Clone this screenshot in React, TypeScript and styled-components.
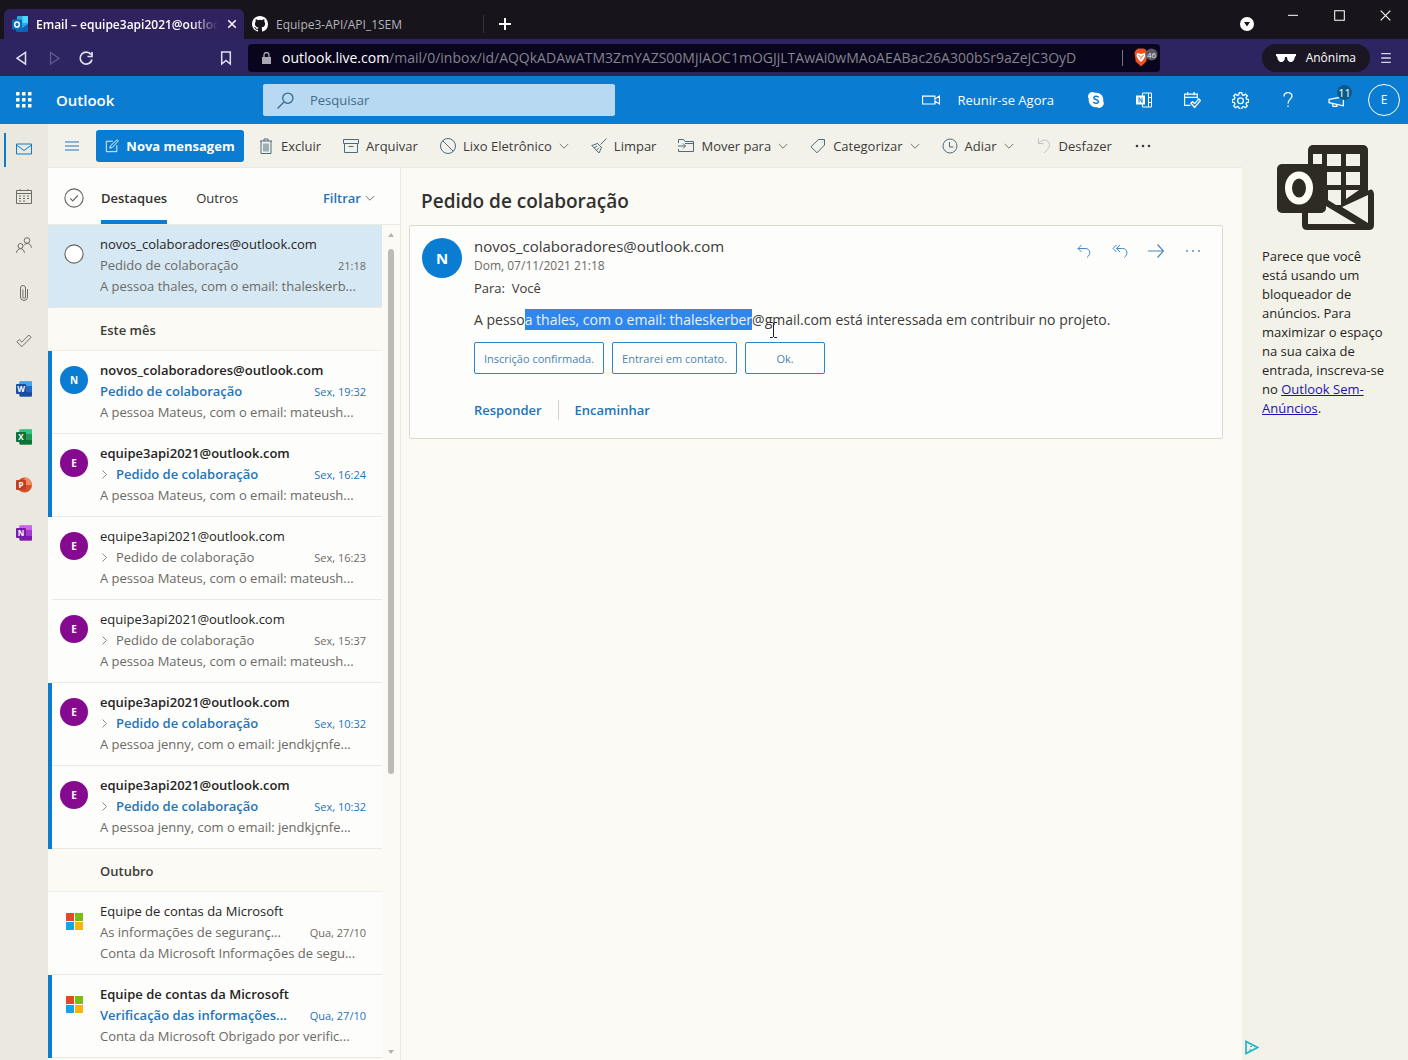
import React from "react";
import styled, { createGlobalStyle, css } from "styled-components";

const blue = "#0a7cd2";
const link = "#1f74b8";

const Global = createGlobalStyle`
  * { box-sizing: border-box; }
  html, body { margin: 0; height: 100%; }
  #root { height: 100vh; }
  body, button, input { font-family: "Open Sans", "Noto Sans", sans-serif; font-size: 13px; color: #3b3a39; }
  button { background: none; border: 0; padding: 0; margin: 0; }
  svg { display: block; flex: none; }
`;

const Shell = styled.div`
  height: 100vh;
  min-height: 600px;
  display: flex;
  flex-direction: column;
  overflow: hidden;
  background: #fbfaf4;
`;

/* ---------- browser chrome ---------- */
const TabStrip = styled.div`
  height: 39px;
  flex: none;
  display: flex;
  padding-left: 4px;
  background: #17141c;
  color: #c9c7d0;
`;
const Tab = styled.div<{ $active?: boolean }>`
  display: flex;
  align-items: center;
  gap: 8px;
  width: 240px;
  height: 30px;
  margin-top: 9px;
  padding: 0 6px 0 8px;
  font-size: 12px;
  white-space: nowrap;
  border-radius: 6px 6px 0 0;
  ${(p) =>
    p.$active
      ? css`background: #30225f; color: #fff; font-weight: 600;`
      : css`color: #b5b3ba; padding-right: 0; &::after { content: ""; margin-left: auto; width: 1px; height: 18px; background: #34313a; }`}
`;
const TabTitle = styled.span<{ $fade?: boolean }>`
  min-width: 0;
  overflow: hidden;
  ${(p) => p.$fade && css`flex: 1; mask-image: linear-gradient(90deg, #000 85%, transparent);`}
`;
const NewTab = styled.button`
  width: 42px;
  margin-top: 9px;
  display: grid;
  place-items: center;
`;
const WindowControls = styled.div`
  margin-left: auto;
  display: flex;
  height: 30px;
`;
const WindowButton = styled.button<{ $low?: boolean }>`
  width: 46px;
  display: grid;
  place-items: center;
  ${(p) => p.$low && css`height: 48px;`}
`;
const NavBar = styled.div`
  height: 37px;
  flex: none;
  display: flex;
  align-items: center;
  background: #2d2462;
  padding: 0 6px 0 6px;
`;
const NavButton = styled.button`
  width: 32px;
  height: 32px;
  display: grid;
  place-items: center;
`;
const NavLeft = styled.div`
  width: 242px;
  display: flex;
  padding-right: 6px;
  button:last-child { margin-left: auto; }
`;
const Address = styled.div`
  flex: 1;
  height: 28px;
  display: flex;
  align-items: center;
  gap: 11px;
  padding: 0 1px 0 14px;
  background: #08051c;
  border-radius: 4px;
  font-size: 14px;
  color: #85838c;
  white-space: nowrap;
  overflow: hidden;
  b { color: #fff; font-weight: 400; }
`;
const UrlText = styled.span`
  flex: 1;
  min-width: 0;
  overflow: hidden;
`;
const Shield = styled.div`
  display: flex;
  align-items: center;
  gap: 10px;
  &::before { content: ""; width: 1px; height: 16px; background: #77747f; }
`;
const NavRight = styled.div`
  width: 242px;
  display: flex;
  align-items: center;
  justify-content: flex-end;
`;
const Private = styled.div`
  height: 28px;
  display: flex;
  align-items: center;
  gap: 10px;
  padding: 0 14px;
  border-radius: 14px;
  background: #1b1623;
  color: #fff;
  font-size: 12px;
`;

/* ---------- outlook header ---------- */
const Header = styled.header`
  height: 48px;
  flex: none;
  display: flex;
  align-items: center;
  background: ${blue};
  color: #fff;
`;
const HeaderButton = styled.button`
  position: relative;
  width: 48px;
  height: 48px;
  display: grid;
  place-items: center;
  color: #fff;
`;
const Brand = styled.div`
  width: 207px;
  padding-left: 8px;
  font-size: 15px;
  font-weight: 600;
`;
const Search = styled.label`
  width: 25%;
  height: 32px;
  margin: 0 auto 0 8px;
  display: flex;
  align-items: center;
  gap: 14px;
  padding: 0 14px;
  border-radius: 2px;
  background: #b7daf2;
  input { flex: 1; min-width: 0; border: 0; background: none; outline: 0; }
  input::placeholder { color: #426a88; opacity: 1; }
`;
const Meet = styled.button`
  display: flex;
  align-items: center;
  gap: 17px;
  margin-right: 18px;
  color: #fff;
`;
const Count = styled.span`
  position: absolute;
  top: 9px;
  right: 8px;
  width: 15px;
  height: 15px;
  border-radius: 8px;
  background: #0b5a8c;
  font-size: 11px;
  line-height: 15px;
  text-align: center;
`;
const Me = styled.span`
  width: 32px;
  height: 32px;
  border: 1px solid #fff;
  border-radius: 50%;
  font-size: 12px;
  line-height: 30px;
`;

/* ---------- body ---------- */
const Body = styled.div`
  flex: 1;
  min-height: 0;
  display: flex;
`;
const Rail = styled.nav`
  width: 48px;
  flex: none;
  display: flex;
  flex-direction: column;
  padding-top: 1px;
  background: #ebe8df;
`;
const RailButton = styled.button<{ $active?: boolean }>`
  height: 48px;
  display: grid;
  place-items: center;
  position: relative;
  ${(p) =>
    p.$active &&
    css`&::before { content: ""; position: absolute; left: 4px; top: 8px; bottom: 6px; width: 2px; background: ${blue}; }`}
`;
const Center = styled.div`
  flex: 1;
  min-width: 0;
  display: flex;
  flex-direction: column;
`;
const Toolbar = styled.div`
  height: 44px;
  flex: none;
  display: flex;
  align-items: center;
  gap: 22px;
  padding: 1px 0 0 16px;
  background: #f3f2ea;
  border-bottom: 1px solid #eceae2;
`;
const Tool = styled.button`
  display: flex;
  align-items: center;
  gap: 7px;
  white-space: nowrap;
  line-height: 20px;
`;
const NewMessage = styled(Tool)`
  width: 148px;
  height: 32px;
  justify-content: center;
  margin: 0 -8px 0 -6px;
  border-radius: 3px;
  background: ${blue};
  color: #fff;
  font-weight: 700;
`;
const Panes = styled.div`
  flex: 1;
  min-height: 0;
  display: flex;
`;
const ListPane = styled.section`
  width: 353px;
  flex: none;
  display: flex;
  flex-direction: column;
  border-right: 1px solid #ebe9df;
`;
const ListHeader = styled.div`
  height: 57px;
  flex: none;
  display: flex;
  align-items: center;
  padding: 4px 25px 0 16px;
  background: #fdfdfb;
  border-bottom: 1px solid #ecebe2;
`;
const Pivot = styled.button<{ $active?: boolean }>`
  height: 52px;
  margin-right: 29px;
  color: #323130;
  ${(p) => p.$active && css`margin-left: 17px; font-weight: 600; box-shadow: inset 0 -4px ${blue};`}
`;
const Filter = styled.button`
  display: flex;
  align-items: center;
  gap: 4px;
  margin-left: auto;
  color: ${link};
  font-weight: 600;
`;
const ListBody = styled.div`
  flex: 1;
  min-height: 0;
  display: flex;
`;
const Messages = styled.div`
  flex: 1;
  min-width: 0;
  overflow: hidden;
`;
const Group = styled.h2`
  height: 43px;
  margin: 0;
  padding: 2px 0 0 52px;
  font-size: 13px;
  font-weight: 600;
  line-height: 40px;
  border-bottom: 1px solid #f0efe6;
`;
const Row = styled.article<{ $unread?: boolean; $selected?: boolean }>`
  height: 83px;
  display: flex;
  gap: 12px;
  padding: 9px 16px 0 8px;
  border-left: 4px solid ${(p) => (p.$unread ? blue : p.$selected ? "#d6e8f4" : "#fdfdfb")};
  background: ${(p) => (p.$selected ? "#d6e8f4" : "#fdfdfb")};
  background-clip: padding-box;
  box-shadow: inset 0 -1px #eae9e2;
  line-height: 21px;
`;
const Avatar = styled.span<{ $color: string; $large?: boolean }>`
  flex: none;
  display: grid;
  place-items: center;
  width: ${(p) => (p.$large ? 40 : 28)}px;
  height: ${(p) => (p.$large ? 40 : 28)}px;
  margin-top: ${(p) => (p.$large ? 0 : 6)}px;
  border-radius: 50%;
  background: ${(p) => p.$color};
  color: #fff;
  font-size: ${(p) => (p.$large ? 15 : 10)}px;
  font-weight: 700;
`;
const IconSlot = styled.span`
  flex: none;
  display: grid;
  place-items: center;
  width: 28px;
  height: 28px;
  margin-top: 6px;
`;
const RowText = styled.div`
  flex: 1;
  min-width: 0;
`;
const Clip = styled.div`
  flex: 1;
  min-width: 0;
  overflow: hidden;
  white-space: nowrap;
  text-overflow: ellipsis;
`;
const From = styled(Clip)<{ $unread?: boolean }>`
  color: #252423;
  font-weight: ${(p) => (p.$unread ? 600 : 400)};
`;
const SubjectLine = styled.div<{ $unread?: boolean }>`
  display: flex;
  align-items: center;
  color: ${(p) => (p.$unread ? link : "#6b6a65")};
  svg { margin: 0 9px 0 2px; }
  ${Clip} { font-weight: ${(p) => (p.$unread ? 600 : 400)}; }
`;
const When = styled.time`
  padding-left: 16px;
  font-size: 11px;
`;
const Preview = styled(Clip)`
  color: #6b6a65;
`;
const Scrollbar = styled.div`
  width: 18px;
  flex: none;
  display: flex;
  flex-direction: column;
  align-items: center;
  gap: 12px;
  padding: 8px 0 6px;
  svg:last-child { margin-top: auto; }
`;
const Thumb = styled.div`
  width: 6px;
  height: 64%;
  border-radius: 3px;
  background: #bdbcb2;
`;

const Reading = styled.main`
  flex: 1;
  min-width: 0;
  padding: 0 19px 0 8px;
`;
const Title = styled.h1`
  height: 57px;
  margin: 0;
  padding: 5px 12px 0;
  font-size: 19px;
  font-weight: 600;
  line-height: 56px;
  color: #323130;
`;
const Card = styled.article`
  display: flex;
  gap: 12px;
  padding: 12px 20px 18px 12px;
  border: 1px solid #dddbd0;
  border-radius: 2px;
  background: #fdfdfb;
`;
const CardBody = styled.div`
  flex: 1;
  min-width: 0;
`;
const CardTop = styled.div`
  display: flex;
  justify-content: space-between;
`;
const Sender = styled.div`
  font-size: 15px;
  line-height: 16px;
`;
const Sent = styled.div`
  color: #6b6a65;
  font-size: 12px;
  line-height: 24px;
`;
const To = styled.div`
  margin-bottom: 10px;
  line-height: 21px;
`;
const Actions = styled.div`
  display: flex;
  align-items: flex-start;
  gap: 20px;
  padding-top: 5px;
`;
const Text = styled.p`
  margin: 0 0 11px;
  font-size: 14px;
  line-height: 22px;
`;
const Mark = styled.mark`
  padding: 1px 0;
  background: #2f86ec;
  color: #eaf3ff;
`;
const CursorSpot = styled.span`
  position: relative;
  svg { position: absolute; left: 4px; top: 12px; }
`;
const Suggestions = styled.div`
  display: flex;
  gap: 8px;
`;
const Suggestion = styled.button`
  height: 32px;
  min-width: 80px;
  padding: 0 9px;
  border: 1px solid #2a86c6;
  border-radius: 2px;
  color: #4a83b4;
  font-size: 11px;
`;
const Replies = styled.div`
  display: flex;
  align-items: center;
  margin-top: 26px;
  button { color: ${link}; font-weight: 600; line-height: 20px; }
  button + button { margin-left: 16px; padding-left: 16px; border-left: 1px solid #d2d0ca; }
`;

const Ad = styled.aside`
  width: 166px;
  flex: none;
  display: flex;
  flex-direction: column;
  padding: 20px 20px 5px;
  background: #f3f2e9;
`;
const AdText = styled.p`
  margin: 17px 0 auto;
  line-height: 19px;
  color: #252423;
  a { color: #1b12b0; }
`;
const AdLogo = styled.svg`
  align-self: center;
`;
const AdMark = styled.svg`
  margin-left: -18px;
`;

/* ---------- icons ---------- */
type IconProps = { d: string; c?: string; s?: number; w?: number; fill?: string };
const Icon = ({ d, c = "currentColor", s = 16, w = 1, fill = "none" }: IconProps) => (
  <svg width={s} height={s} viewBox="0 0 16 16" fill={fill} stroke={c} strokeWidth={w} aria-hidden="true">
    <path d={d} />
  </svg>
);
const Chevron = ({ c = "#777670" }: { c?: string }) => (
  <svg width="10" height="10" viewBox="0 0 10 10" fill="none" stroke={c}><path d="M.8 3l4.2 4.2L9.2 3" /></svg>
);
const ChevronRight = () => (
  <svg width="5" height="9" viewBox="0 0 5 9" fill="none" stroke="#8b8a85"><path d="M.5.5l4 4-4 4" /></svg>
);

const OfficeIcon = ({ letter, dark, mid, light, round }: { letter: string; dark: string; mid: string; light: string; round?: boolean }) => (
  <svg width="16" height="16" viewBox="0 0 16 16" aria-hidden="true">
    {round ? (
      <>
        <circle cx="8.5" cy="8" r="7.5" fill={mid} />
        <path d="M8.5.5A7.500 7.500 0 0 1 16 8H8.500Z" fill={light} />
      </>
    ) : (
      <>
        <rect x="3.500" y=".5" width="12.500" height="15" rx="1" fill={mid} />
        <path d="M4 .5h11.500q.5 0 .5.5v4H3.500V1q0-.5.5-.5Z" fill={light} />
        <path d="M3.500 11H16v3.500q0 1-1 1H4.500q-1 0-1-1Z" fill={dark} />
      </>
    )}
    <rect x="0" y="3" width="10" height="10" rx="1" fill={dark} />
    <text x="5" y="11" fontSize="8" fontWeight="700" textAnchor="middle" fill="#fff">{letter}</text>
  </svg>
);

const MsLogo = () => (
  <svg width="17" height="17" viewBox="0 0 17 17" aria-hidden="true">
    <path fill="#e2482a" d="M0 0h8v8H0z" />
    <path fill="#7cbb10" d="M9 0h8v8H9z" />
    <path fill="#13a5e8" d="M0 9h8v8H0z" />
    <path fill="#f8b40c" d="M9 9h8v8H9z" />
  </svg>
);

const OutlookFavicon = () => (
  <svg width="16" height="16" viewBox="0 0 16 16" aria-hidden="true">
    <rect x="5" y="0" width="11" height="15" rx="1" fill="#28a8ea" />
    <path fill="#50d9ff" d="M10.500 0H15q1 0 1 1v6h-5.500z" />
    <path fill="#0f64b5" d="M4 8l6 4 6-4v7q0 1-1 1H5q-1 0-1-1z" />
    <rect y="3.500" width="10" height="10" rx="1" fill="#0a6ebd" />
    <ellipse cx="5" cy="8.500" rx="2.300" ry="2.600" fill="none" stroke="#fff" strokeWidth="1.500" />
  </svg>
);

const railIcons = [
  "M.5 3h15v10H.5zM.5 4L8 9.500 15.500 4",
  "M.5 1.500h15v13H.5zM.5 4.500h15M4 0v2M12 0v2M3 7h2M7 7h2M11 7h2M3 9.500h2M7 9.500h2M11 9.500h2M3 12h2M7 12h2",
  "M13.800 3.500a2.800 2.800 0 1 1-5.600 0 2.800 2.800 0 0 1 5.600 0ZM7 9a2.500 2.500 0 1 1-5 0 2.500 2.500 0 0 1 5 0ZM.6 15.800c.3-5.500 7.500-5.500 7.800 0M8 8.300c2.500-3.300 7-2 7.400 2.500",
  "M11.500 4v8a3.500 3.500 0 0 1-7 0V3a2.400 2.400 0 0 1 5 0v9a1.300 1.300 0 0 1-2.600 0V4.500",
  "M.9 8.800l2.300-2.300 2.600 2.600L12.800 2l2.300 2.300L5.800 13.700z",
];
const railNames = ["Email", "Calendário", "Pessoas", "Arquivos", "Tarefas"];

const tools: { label: string; d: string; menu?: boolean; c?: string }[] = [
  { label: "Excluir", d: "M2 3h12M6 3V1h4v2M3 3v12.500h10V3M6 5.500v8M8 5.500v8M10 5.500v8" },
  { label: "Arquivar", d: "M.5 1.500h15v4H.5zM1.500 5.500v9h13v-9M5.500 8.500h5" },
  { label: "Lixo Eletrônico", d: "M15.500 8A7.500 7.500 0 1 1 .5 8a7.500 7.500 0 0 1 15 0ZM2.700 2.700l10.600 10.600", menu: true },
  { label: "Limpar", d: "M15.500 .5L9.500 6.500M6 5l5 5M6.500 5.500L.8 7.500 8 15l2.500-5.500M3.200 9.800l3-1.800M5.500 12.200l2.500-2.500" },
  { label: "Mover para", d: "M.5 5V1.500h5l1.500 2h8.500v10h-15V11M0 8h7.500M5 5.500L7.500 8 5 10.500M7 5.500h8", menu: true },
  { label: "Categorizar", d: "M8.500 1.500h6v5.500L7 14.800.9 8.800zM12.300 4h.5", menu: true },
  { label: "Adiar", d: "M15 8A7 7 0 1 1 1 8a7 7 0 0 1 14 0ZM7.500 4v5h4", menu: true },
  { label: "Desfazer", d: "M2.500.5v5h5M2.500 5.500C6 .5 13 1 13.500 6.500c0 4-3 6-5.500 8.500", c: "#c4c3bd" },
];

type Mail = { from: string; subject: string; when: string; preview: string; unread?: boolean; thread?: boolean; kind: "N" | "E" | "MS" };
const eq = "equipe3api2021@outlook.com";
const ped = "Pedido de colaboração";
const mat = "A pessoa Mateus, com o email: mateush...";
const jen = "A pessoa jenny, com o email: jendkjçnfe...";
const thisMonth: Mail[] = [
  { from: "novos_colaboradores@outlook.com", subject: ped, when: "Sex, 19:32", preview: mat, unread: true, kind: "N" },
  { from: eq, subject: ped, when: "Sex, 16:24", preview: mat, unread: true, thread: true, kind: "E" },
  { from: eq, subject: ped, when: "Sex, 16:23", preview: mat, thread: true, kind: "E" },
  { from: eq, subject: ped, when: "Sex, 15:37", preview: mat, thread: true, kind: "E" },
  { from: eq, subject: ped, when: "Sex, 10:32", preview: jen, unread: true, thread: true, kind: "E" },
  { from: eq, subject: ped, when: "Sex, 10:32", preview: jen, unread: true, thread: true, kind: "E" },
];
const october: Mail[] = [
  { from: "Equipe de contas da Microsoft", subject: "As informações de seguranç...", when: "Qua, 27/10", preview: "Conta da Microsoft Informações de segu...", kind: "MS" },
  { from: "Equipe de contas da Microsoft", subject: "Verificação das informações...", when: "Qua, 27/10", preview: "Conta da Microsoft Obrigado por verific...", unread: true, kind: "MS" },
];

const MailRow = ({ m }: { m: Mail }) => (
  <Row $unread={m.unread}>
    {m.kind === "MS" ? (
      <IconSlot><MsLogo /></IconSlot>
    ) : (
      <Avatar $color={m.kind === "N" ? blue : "#850a90"}>{m.kind}</Avatar>
    )}
    <RowText>
      <From $unread={m.unread}>{m.from}</From>
      <SubjectLine $unread={m.unread}>
        {m.thread && <ChevronRight />}
        <Clip>{m.subject}</Clip>
        <When>{m.when}</When>
      </SubjectLine>
      <Preview>{m.preview}</Preview>
    </RowText>
  </Row>
);

export default function App() {
  return (
    <Shell>
      <Global />
      <TabStrip>
        <Tab $active>
          <OutlookFavicon />
          <TabTitle $fade>Email – equipe3api2021@outlook</TabTitle>
          <Icon d="M3 3l10 10M13 3L3 13" c="#fff" s={12} w={2} />
        </Tab>
        <Tab>
          <svg width="16" height="16" viewBox="0 0 16 16" fill="#fff" aria-hidden="true">
            <path d="M8 0C3.580 0 0 3.580 0 8c0 3.540 2.290 6.530 5.470 7.590.4.070.55-.17.55-.38 0-.19-.01-.82-.01-1.490-2.010.37-2.530-.49-2.690-.94-.09-.23-.48-.94-.82-1.130-.28-.15-.68-.52-.01-.53.63-.01 1.080.58 1.230.82.72 1.210 1.870.87 2.330.66.07-.52.28-.87.51-1.070-1.780-.2-3.640-.89-3.640-3.950 0-.87.31-1.590.82-2.150-.08-.2-.36-1.020.08-2.120 0 0 .67-.21 2.200.82a7.600 7.600 0 0 1 4 0c1.530-1.040 2.200-.82 2.200-.82.44 1.100.16 1.920.08 2.120.51.56.82 1.270.82 2.150 0 3.070-1.870 3.750-3.650 3.950.29.25.54.73.54 1.480 0 1.070-.01 1.930-.01 2.200 0 .21.15.46.55.38A8.010 8.010 0 0 0 16 8c0-4.420-3.580-8-8-8z" />
          </svg>
          <TabTitle>Equipe3-API/API_1SEM</TabTitle>
        </Tab>
        <NewTab aria-label="Nova guia"><Icon d="M8 2v12M2 8h12" c="#fff" w={2} /></NewTab>
        <WindowControls>
          <WindowButton $low aria-label="Guias">
            <svg width="14" height="14" viewBox="0 0 14 14"><circle cx="7" cy="7" r="7" fill="#fff" /><path d="M4 5h6L7 9.500z" fill="#17141c" /></svg>
          </WindowButton>
          <WindowButton aria-label="Minimizar"><Icon d="M0 8.500h16" c="#fff" s={10} w={1.600} /></WindowButton>
          <WindowButton aria-label="Maximizar"><Icon d="M1 1h14v14H1z" c="#fff" s={11} w={1.500} /></WindowButton>
          <WindowButton aria-label="Fechar"><Icon d="M1 1l14 14M15 1L1 15" c="#fff" s={11} w={1.600} /></WindowButton>
        </WindowControls>
      </TabStrip>
      <NavBar>
        <NavLeft>
          <NavButton aria-label="Voltar"><Icon d="M11.500 2.500v11.500L3 8.200z" c="#e4e1ee" w={1.500} /></NavButton>
          <NavButton aria-label="Avançar"><Icon d="M4.500 2.500v11.500L13 8.200z" c="#625b8b" w={1.300} /></NavButton>
          <NavButton aria-label="Recarregar"><Icon d="M13 4.500A6 6 0 1 0 14 9.500M14 2v4.500H9.500" c="#e4e1ee" w={1.700} /></NavButton>
          <NavButton aria-label="Favoritos"><Icon d="M3.700 2h8.600v12L8 10.500 3.700 14z" c="#e4e1ee" w={1.500} /></NavButton>
        </NavLeft>
        <Address>
          <svg width="9" height="12" viewBox="0 0 9 12"><path d="M0 5h9v7H0z" fill="#aaa8b2" /><path d="M2 5V3a2.500 2.500 0 0 1 5 0v2" fill="none" stroke="#aaa8b2" strokeWidth="1.300" /></svg>
          <UrlText><b>outlook.live.com</b>/mail/0/inbox/id/AQQkADAwATM3ZmYAZS00MjIAOC1mOGJjLTAwAi0wMAoAEABac26A300bSr9aZeJC3OyD</UrlText>
          <Shield>
            <svg width="26" height="20" viewBox="0 0 26 20">
              <path d="M3 2l2-1.500h6L13 2l1.500 2.500-1.200 9L8 18.500 2.700 13.500l-1.200-9z" fill="#f0501e" />
              <path d="M4 5l4 1 4-1 .5 3-2 3.500L8 14l-2.500-2.500-2-3.500z" fill="#fff" />
              <path d="M5.500 7.500l2 1M10.500 7.500l-2 1M8 9v2.500" stroke="#f0501e" />
              <circle cx="18.500" cy="6.500" r="6" fill="#5b5964" />
              <text x="18.500" y="9.500" fontSize="8" textAnchor="middle" fill="#e6e5ea">46</text>
            </svg>
          </Shield>
        </Address>
        <NavRight>
          <Private>
            <svg width="20" height="8" viewBox="0 0 20 8" fill="#fff"><path d="M0 0h20v2l-1 .5-1 3.500-2 2h-2.500l-2-2L11 3H9l-.5 3-2 2H4L2 6 1 2.500 0 2z" /></svg>
            Anônima
          </Private>
          <NavButton aria-label="Menu"><Icon d="M2.500 3h11M2.500 8h11M2.500 13h11" c="#d9d6e4" s={14} w={1.600} /></NavButton>
        </NavRight>
      </NavBar>

      <Header>
        <HeaderButton aria-label="Aplicativos">
          <svg width="16" height="16" viewBox="0 0 16 16" fill="#fff">
            {[0, 6, 12].map((y) => [0, 6, 12].map((x) => <rect key={`${x}-${y}`} x={x} y={y} width="3.500" height="3.500" rx=".5" />))}
          </svg>
        </HeaderButton>
        <Brand>Outlook</Brand>
        <Search>
          <Icon d="M15 5.800a4.800 4.800 0 1 1-9.600 0 4.800 4.800 0 0 1 9.600 0ZM6.800 9.200L.5 15.500" c="#37688f" s={17} w={1.200} />
          <input aria-label="Pesquisar" placeholder="Pesquisar" />
        </Search>
        <Meet><Icon d="M.5 4.500h11v7H.5zM11.500 7l4-2.500v7l-4-2.500" s={18} />Reunir-se Agora</Meet>
        <HeaderButton aria-label="Skype">
          <svg width="16" height="16" viewBox="0 0 16 16"><path d="M4.500 0a4.500 4.500 0 0 1 2.400.8A7.200 7.200 0 0 1 15.200 9.200 4.500 4.500 0 0 1 9 15.200 7.200 7.200 0 0 1 .8 6.900 4.500 4.500 0 0 1 4.500 0Z" fill="#fff" /><path d="M10.700 5.400C10 4 6 3.600 5.800 5.700c-.1 2 4.700 1.500 4.700 3.700 0 2.200-4.300 2.300-5.200.6" fill="none" stroke={blue} strokeWidth="1.500" /></svg>
        </HeaderButton>
        <HeaderButton aria-label="OneNote">
          <svg width="16" height="16" viewBox="0 0 16 16" fill="none" stroke="#fff"><path d="M6.500 4V1h9v14h-9v-3M12.500 1v14M12.500 5.500h3M12.500 10.500h3" /><path d="M0 3.500h9v9H0z" fill="#fff" stroke="none" /><path d="M3 10.500v-5l3 5v-5" stroke={blue} /></svg>
        </HeaderButton>
        <HeaderButton aria-label="Meu Dia"><Icon d="M6 12.500H.5V2h12v4M.5 5h12M3.500 0v3M9.500 0v3M6.500 10.500l1.500-1.500 2 2 4-4.500 1.500 1.500-5.500 6.500z" s={17} w={1.200} /></HeaderButton>
        <HeaderButton aria-label="Configurações"><Icon d="M6.800.6h2.400l.4 2 1.300.6 1.800-1.200 1.700 1.700-1.200 1.800.6 1.300 2 .4v2.400l-2 .4-.6 1.300 1.200 1.800-1.700 1.700-1.800-1.200-1.300.6-.4 2H6.800l-.4-2-1.300-.6-1.800 1.200-1.700-1.700 1.200-1.800-.6-1.300-2-.4V7.200l2-.4.6-1.300-1.200-1.800 1.700-1.700 1.800 1.200 1.300-.6zM10.700 8.300a2.700 2.700 0 1 1-5.400 0 2.700 2.700 0 0 1 5.400 0Z" s={17} w={1.200} /></HeaderButton>
        <HeaderButton aria-label="Ajuda"><Icon d="M4 4.500c0-5 8-5 8-.5 0 3-4 3.500-4 7.500M8 13.500V15" w={1.300} /></HeaderButton>
        <HeaderButton aria-label="Novidades"><Icon d="M1 7L14.500 4.500v8.500L1 10zM4 10.800l.8 2.700h3.500l-.5-2" s={17} w={1.200} /><Count>11</Count></HeaderButton>
        <HeaderButton aria-label="Conta"><Me>E</Me></HeaderButton>
      </Header>

      <Body>
        <Rail>
          {railIcons.map((d, i) => (
            <RailButton key={railNames[i]} $active={i === 0} aria-label={railNames[i]}><Icon d={d} c={i ? "#6d6c66" : blue} /></RailButton>
          ))}
          <RailButton aria-label="Word"><OfficeIcon letter="W" dark="#1a4ea0" mid="#2268c4" light="#41a5ee" /></RailButton>
          <RailButton aria-label="Excel"><OfficeIcon letter="X" dark="#0f7038" mid="#1c9a55" light="#33c481" /></RailButton>
          <RailButton aria-label="PowerPoint"><OfficeIcon letter="P" dark="#c0401f" mid="#d9502b" light="#f08a63" round /></RailButton>
          <RailButton aria-label="OneNote"><OfficeIcon letter="N" dark="#7a1aa8" mid="#a33ad0" light="#ca64ea" /></RailButton>
        </Rail>
        <Center>
          <Toolbar>
            <Tool aria-label="Painel"><Icon d="M1 4h14M1 8h14M1 12h14" c={link} /></Tool>
            <NewMessage><Icon d="M9 2.500H1.500v12h12V7M5.500 10.500l1-3L14 .8l1.300 1.300L8.500 9.500z" s={14} />Nova mensagem</NewMessage>
            {tools.map((t) => (
              <Tool key={t.label}><Icon d={t.d} c={t.c || "#4c6b7d"} />{t.label}{t.menu && <Chevron />}</Tool>
            ))}
            <Tool aria-label="Mais"><svg width="18" height="4" viewBox="0 0 18 4" fill="#3b3a39"><circle cx="3" cy="2" r="1.300" /><circle cx="9" cy="2" r="1.300" /><circle cx="15" cy="2" r="1.300" /></svg></Tool>
          </Toolbar>
          <Panes>
            <ListPane>
              <ListHeader>
                <Icon d="M15.300 8a7.300 7.300 0 1 1-14.600 0 7.300 7.300 0 0 1 14.600 0ZM5 8.300l2 2L11 6" c="#66655f" s={20} w={0.900} />
                <Pivot $active>Destaques</Pivot>
                <Pivot>Outros</Pivot>
                <Filter>Filtrar <Chevron /></Filter>
              </ListHeader>
              <ListBody>
                <Messages>
                  <Row $selected>
                    <IconSlot><Icon d="M15.300 8a7.300 7.300 0 1 1-14.600 0 7.300 7.300 0 0 1 14.600 0Z" c="#66655f" fill="#fff" s={20} w={0.900} /></IconSlot>
                    <RowText>
                      <From>novos_colaboradores@outlook.com</From>
                      <SubjectLine><Clip>{ped}</Clip><When>21:18</When></SubjectLine>
                      <Preview>A pessoa thales, com o email: thaleskerb...</Preview>
                    </RowText>
                  </Row>
                  <Group>Este mês</Group>
                  {thisMonth.map((m, i) => <MailRow key={i} m={m} />)}
                  <Group>Outubro</Group>
                  {october.map((m, i) => <MailRow key={i} m={m} />)}
                </Messages>
                <Scrollbar>
                  <svg width="6" height="4" viewBox="0 0 6 4"><path d="M0 4l3-4 3 4z" fill="#b5b4aa" /></svg>
                  <Thumb />
                  <svg width="6" height="4" viewBox="0 0 6 4"><path d="M0 0h6L3 4z" fill="#b5b4aa" /></svg>
                </Scrollbar>
              </ListBody>
            </ListPane>
            <Reading>
              <Title>{ped}</Title>
              <Card>
                <Avatar $color={blue} $large>N</Avatar>
                <CardBody>
                  <CardTop>
                    <div>
                      <Sender>novos_colaboradores@outlook.com</Sender>
                      <Sent>Dom, 07/11/2021 21:18</Sent>
                    </div>
                    <Actions>
                      <button aria-label="Responder"><Icon d="M5.500 2L2 5.500 5.500 9M2 5.500h7c6 0 6 6 2 9" c="#4388c8" /></button>
                      <button aria-label="Responder a todos"><Icon d="M4.500 2L1 5.500 4.500 9M8 2L4.500 5.500 8 9M4.500 5.500h6c5.500 0 5.500 6 2 9" c="#4388c8" /></button>
                      <button aria-label="Encaminhar"><Icon d="M0 8h15M9.500 1.500L15.500 8l-6 6.500" c="#4388c8" w={1.200} /></button>
                      <button aria-label="Mais ações"><svg width="18" height="16" viewBox="0 0 18 16" fill="#5a8fc4"><circle cx="3" cy="8" r="1" /><circle cx="9" cy="8" r="1" /><circle cx="15" cy="8" r="1" /></svg></button>
                    </Actions>
                  </CardTop>
                  <To>Para:&nbsp; Você</To>
                  <Text>
                    A pesso<Mark>a thales, com o email: thaleskerber</Mark>@
                    <CursorSpot>g<svg width="9" height="16" viewBox="0 0 9 16" fill="none" stroke="#201f1e"><path d="M1 .5h2.500l1 1 1-1H8M4.500 1v14M1 15.500h2.500l1-1 1 1H8" /></svg></CursorSpot>
                    mail.com está interessada em contribuir no projeto.
                  </Text>
                  <Suggestions>
                    <Suggestion>Inscrição confirmada.</Suggestion>
                    <Suggestion>Entrarei em contato.</Suggestion>
                    <Suggestion>Ok.</Suggestion>
                  </Suggestions>
                  <Replies><button>Responder</button><button>Encaminhar</button></Replies>
                </CardBody>
              </Card>
            </Reading>
          </Panes>
        </Center>
        <Ad>
          <AdLogo width="98" height="86" viewBox="0 0 98 86" aria-hidden="true">
            <rect x="32" y="1" width="60" height="62" rx="5" fill="#2e2b24" />
            <path fill="#f3f2e9" d="M37 10h9v10h-9zM51 10h14v12H51zM70 10h14v12H70zM51 28h14v13H51zM70 28h14v13H70z" />
            <path fill="#2e2b24" d="M26 60h12V48H90q7-6 8 2v31q0 5-5 5H31q-5 0-5-5z" />
            <path fill="#f3f2e9" d="M52 46h13v15l-5 0-8-5zM70 46h13l-13 9z" />
            <path fill="#f3f2e9" d="M32 69h13q5-2 5-7L80 80H32zM92 51v28L66 63z" />
            <rect x="1" y="20" width="49" height="49" rx="5" fill="#2e2b24" />
            <ellipse cx="23" cy="44" rx="10.500" ry="13" fill="none" stroke="#fdfdf6" strokeWidth="7" />
          </AdLogo>
          <AdText>Parece que você está usando um bloqueador de anúncios. Para maximizar o espaço na sua caixa de entrada, inscreva-se no <a href="#premium">Outlook Sem-Anúncios</a>.</AdText>
          <AdMark width="15" height="15" viewBox="0 0 15 15" fill="none" stroke="#22b5c6" strokeWidth="1.700"><path d="M2 1.500v12l11.500-6z" /><path d="M6 6.500h2M6 9v1.500" strokeWidth="1.200" /></AdMark>
        </Ad>
      </Body>
    </Shell>
  );
}
